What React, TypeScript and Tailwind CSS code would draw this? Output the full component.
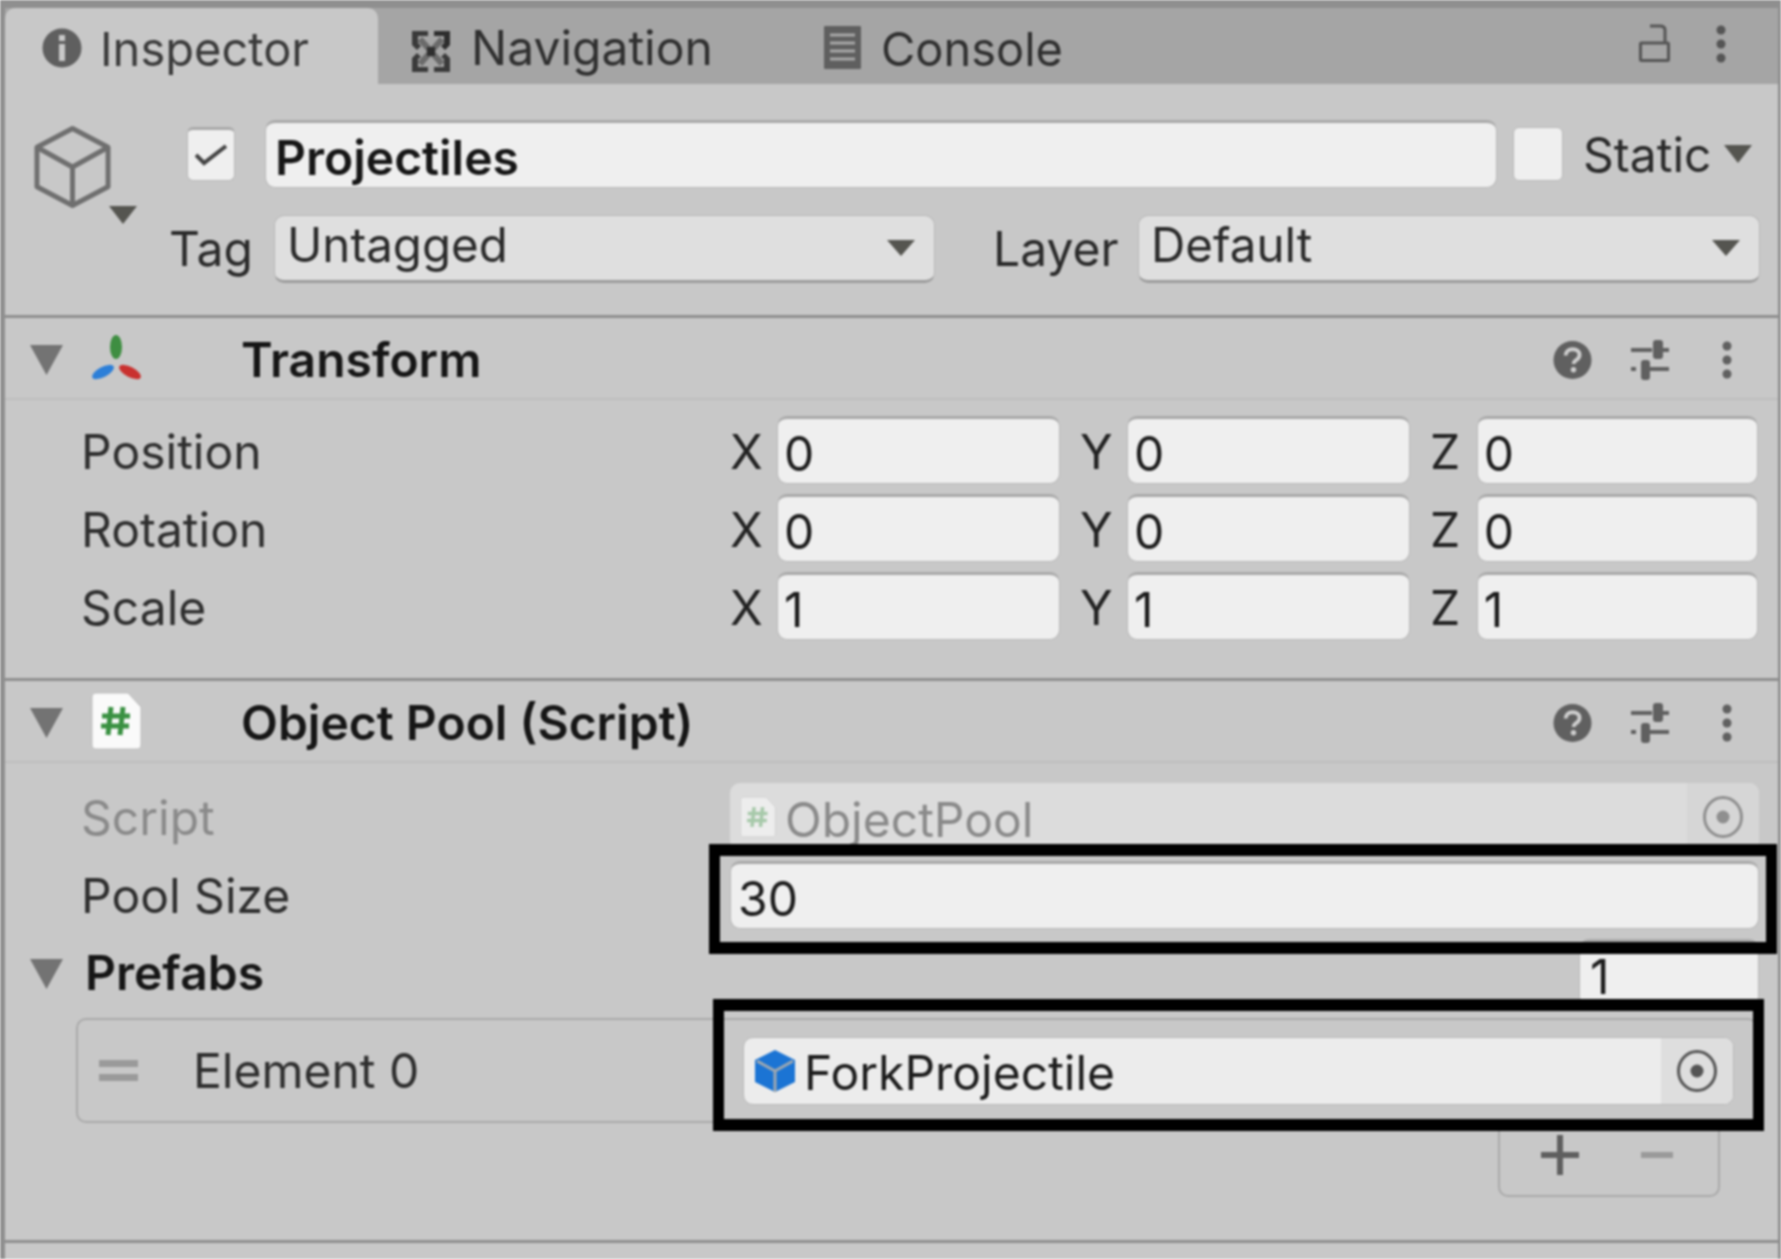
const CaretDown = ({ className }: { className: string }) => (
  <svg viewBox="0 0 10 10" preserveAspectRatio="none" className={className}>
    <path d="M0 0H10L5 10Z" fill="currentColor" />
  </svg>
);

const Kebab = ({ className }: { className: string }) => (
  <svg viewBox="0 0 12 38" className={className}>
    <circle cx="6" cy="5" r="4.5" fill="currentColor" />
    <circle cx="6" cy="19" r="4.5" fill="currentColor" />
    <circle cx="6" cy="33" r="4.5" fill="currentColor" />
  </svg>
);

const HelpIcon = () => (
  <svg viewBox="0 0 40 40" className="w-[39px] h-[40px]">
    <circle cx="20" cy="20" r="19.5" fill="#606060" />
    <path d="M13 15.5c0-4 3-6.5 7.2-6.5s7 2.400 7 5.800c0 3-1.800 4.300-3.800 5.600-1.600 1-2.200 1.800-2.200 3.600" fill="none" stroke="#cfcfcf" strokeWidth="4" />
    <circle cx="21" cy="30" r="2.800" fill="#cfcfcf" />
  </svg>
);

const SlidersIcon = () => (
  <svg viewBox="0 0 38 40" className="w-[38px] h-[40px]" fill="#606060">
    <rect x="0" y="8" width="21" height="4" />
    <rect x="22" y="0" width="10" height="19" rx="3" />
    <rect x="31" y="8" width="7" height="4" />
    <rect x="0" y="27" width="5" height="4" />
    <rect x="10" y="20" width="9" height="20" rx="3" />
    <rect x="18" y="27" width="20" height="4" />
  </svg>
);

const ComponentActions = () => (
  <div className="flex items-center text-[#606060] translate-y-[2px]">
    <HelpIcon />
    <div className="ml-[39px]"><SlidersIcon /></div>
    <Kebab className="ml-[52px] w-[12px] h-[38px]" />
  </div>
);

const CubeOutline = () => (
  <svg viewBox="0 0 80 84" className="w-[79px] h-[84px]" fill="none" stroke="#6f6f6f" strokeWidth="5" strokeLinejoin="round">
    <path d="M40 3L76 22V62L40 81L4 62V22Z" />
    <path d="M4 22L40 42L76 22M40 42V81" />
  </svg>
);

const InfoIcon = () => (
  <svg viewBox="0 0 40 40" className="w-[40px] h-[40px]">
    <circle cx="20" cy="20" r="19.5" fill="#5f5f5f" />
    <rect x="17" y="7" width="6" height="6" fill="#c8c8c8" />
    <rect x="17" y="16" width="6" height="17" fill="#c8c8c8" />
  </svg>
);

const NavIcon = () => (
  <svg viewBox="0 0 38 41" className="w-[38px] h-[41px]">
    <path d="M8 8L30 33M30 8L8 33" stroke="#6a6a6a" strokeWidth="6" />
    <path d="M15 16H23V25H15Z" fill="#2e2e2e" />
    <path d="M0 0H16V5H6V12L9 15L5 19L0 14Z" fill="#3a3a3a" />
    <path d="M38 0H22V5H32V12L29 15L33 19L38 14Z" fill="#2e2e2e" />
    <path d="M0 41H16V36H6V28L9 26L5 22L0 27Z" fill="#3a3a3a" />
    <path d="M38 41H22V36H32V28L29 26L33 22L38 27Z" fill="#3a3a3a" />
  </svg>
);

const ConsoleIcon = () => (
  <svg viewBox="0 0 37 43" className="w-[37px] h-[43px]">
    <rect width="37" height="43" rx="1" fill="#5f5f5f" />
    <path d="M6 9H31M6 17H31M6 25H31M6 33H31" stroke="#a8a8a8" strokeWidth="3" />
  </svg>
);

const LockIcon = () => (
  <svg viewBox="0 0 31 38" className="w-[31px] h-[38px]" fill="none" stroke="#555555" strokeWidth="3">
    <rect x="1.5" y="19" width="28" height="17.5" rx="1" />
    <path d="M26 19V6C26 3 24 2 21 2H11" />
  </svg>
);

const TransformIcon = () => (
  <svg viewBox="0 0 53 46" className="w-[53px] h-[46px]">
    <ellipse cx="26" cy="12" rx="6" ry="12" fill="#3e8e41" />
    <ellipse cx="13" cy="37" rx="5" ry="12" transform="rotate(62 13 37)" fill="#2c7fd8" />
    <ellipse cx="40" cy="37" rx="5" ry="12" transform="rotate(-62 40 37)" fill="#c9312f" />
  </svg>
);

const ScriptIcon = ({ className, faded }: { className: string; faded?: boolean }) => (
  <svg viewBox="0 0 51 58" className={className}>
    <path d="M5 1H37L50 15V53C50 55.5 48.500 57 46 57H5C2.500 57 1 55.500 1 53V5C1 2.500 2.500 1 5 1Z" fill={faded ? "#ededed" : "#fafafa"} stroke={faded ? "#cfcfcf" : "#bdbdbd"} />
    <path d="M20 15L17 43M32 15L29 43M11 24H39M10 34H38" stroke={faded ? "#a7c9aa" : "#3a9142"} strokeWidth="5" fill="none" />
  </svg>
);

const PrefabCube = () => (
  <svg viewBox="0 0 40 42" className="w-[40px] h-[42px]">
    <path d="M20 0L40 10V32L20 42L0 32V10Z" fill="#1b74d4" />
    <path d="M20 21L38 11M20 21L2 11M20 21V42" fill="none" stroke="#9fa8b0" strokeWidth="3" />
  </svg>
);

const Target = ({ color }: { color: string }) => (
  <svg viewBox="0 0 40 42" className="w-[40px] h-[42px]" fill="none">
    <ellipse cx="20" cy="21" rx="18.500" ry="19.500" stroke={color} strokeWidth="3" />
    <circle cx="20" cy="21" r="6.500" fill={color} />
  </svg>
);

const InputBox = ({ children, className }: { children?: React.ReactNode; className: string }) => (
  <div className={`h-[68px] bg-[#efefef] rounded-[10px] border border-[#b8b8b8] border-t-[3px] border-t-[#a9a9a9] flex items-center text-[#1c1c1c] ${className}`}>
    <span className="translate-y-[3px]">{children}</span>
  </div>
);

const Dropdown = ({ label, className }: { label: string; className: string }) => (
  <div className={`h-[68px] bg-[#dfdfdf] rounded-[10px] border border-[#b8b8b8] border-b-[3px] border-b-[#9c9c9c] flex items-center justify-between pl-[12px] pr-[19px] text-[#2a2a2a] ${className}`}>
    <span className="-translate-y-[3px] text-[47.500px]">{label}</span>
    <CaretDown className="w-[28px] h-[16px] text-[#555550]" />
  </div>
);

const Disclosure = () => <CaretDown className="w-[33px] h-[30px] text-[#737373] translate-y-[2px]" />;

const VectorRow = ({ label, values }: { label: string; values: string[] }) => (
  <div className="flex items-center h-[67px]">
    <span className="w-[728px] pl-[76px] text-[#2e2e2e] translate-y-[2px]">{label}</span>
    {["X", "Y", "Z"].map((axis, i) => (
      <div key={axis} className={`flex items-center ${i < 2 ? "w-[350px]" : "w-[325px]"}`}>
        <span className="w-[44px] -ml-[3px] mr-[3px] text-[#222222] translate-y-[2px]">{axis}</span>
        <InputBox className={`pl-[6px] ${i === 0 ? "w-[283px]" : i === 1 ? "w-[283px]" : "w-[282px]"}`}>{values[i]}</InputBox>
      </div>
    ))}
  </div>
);

const ComponentHeader = ({ icon, title }: { icon: React.ReactNode; title: string }) => (
  <div className="h-[82px] flex items-center border-b-2 border-[#bdbdbd] pl-[25px] pr-[45px]">
    <Disclosure />
    <div className="w-[53px] ml-[27px] flex justify-center">{icon}</div>
    <span className="ml-[98px] font-semibold text-[#161616] flex-1 translate-y-[2px]">{title}</span>
    <ComponentActions />
  </div>
);

export default function App() {
  return (
    <div className="relative w-[1781px] h-[1259px] overflow-hidden bg-[#c8c8c8] border-l-[5px] border-r-[3px] border-t-[8px] border-[#8f8f8f] text-[48px] leading-none font-['Inter',sans-serif] blur-[1px]">
      {/* tab strip */}
      <div className="h-[76px] bg-[#a5a5a5] flex items-center text-[#2f2f2f]">
        <div className="w-[373px] h-full bg-[#c8c8c8] rounded-t-[10px] flex items-center pl-[37px]">
          <div className="translate-y-[2px]"><InfoIcon /></div>
          <span className="ml-[18px] text-[47px] text-[#3a3a3a] translate-y-[2px]">Inspector</span>
        </div>
        <div className="ml-[34px] mt-[10px]"><NavIcon /></div>
        <span className="ml-[21px] translate-y-[2px]">Navigation</span>
        <div className="ml-[111px] translate-y-[1px]"><ConsoleIcon /></div>
        <span className="ml-[20px] text-[47px] translate-y-[2px]">Console</span>
        <div className="flex-1" />
        <div className="-translate-y-[3px]"><LockIcon /></div>
        <Kebab className="ml-[45px] mr-[51px] w-[12px] h-[38px] text-[#555555] -translate-y-[2px]" />
      </div>

      {/* game object header */}
      <div className="h-[234px] flex border-b-[3px] border-[#8f8f8f]">
        <div className="w-[145px] pt-[41px] pl-[28px] relative">
          <CubeOutline />
          <CaretDown className="absolute left-[104px] top-[122px] w-[28px] h-[18px] text-[#555550]" />
        </div>
        <div className="flex-1 pt-[36px] flex flex-col gap-[27px]">
          <div className="flex items-center h-[68px]">
            <div className="ml-[37px] w-[48px] h-[54px] bg-[#efefef] rounded-[6px] border border-[#b8b8b8] border-t-[3px] border-t-[#a9a9a9] flex items-center justify-center">
              <svg viewBox="0 0 32 22" className="w-[32px] h-[22px]" fill="none" stroke="#444444" strokeWidth="4">
                <path d="M1 11L9 19L31 2" />
              </svg>
            </div>
            <InputBox className="ml-[30px] w-[1232px] pl-[9px] font-semibold text-[#161616]">Projectiles</InputBox>
            <div className="ml-[16px] w-[50px] h-[54px] bg-[#efefef] rounded-[6px] border border-[#b8b8b8]" />
            <span className="ml-[20px] text-[#2a2a2a] translate-y-[1px]">Static</span>
            <CaretDown className="ml-[13px] w-[28px] h-[18px] text-[#555550]" />
          </div>
          <div className="flex items-center">
            <span className="ml-[19px] w-[105px] text-[#2a2a2a]">Tag</span>
            <Dropdown label="Untagged" className="w-[661px]" />
            <span className="ml-[58px] w-[145px] text-[#2a2a2a]">Layer</span>
            <Dropdown label="Default" className="w-[622px]" />
          </div>
        </div>
      </div>

      {/* transform */}
      <div className="h-[363px] border-b-[3px] border-[#8f8f8f]">
        <ComponentHeader icon={<TransformIcon />} title="Transform" />
        <div className="pt-[16px] flex flex-col gap-[11px]">
          <VectorRow label="Position" values={["0", "0", "0"]} />
          <VectorRow label="Rotation" values={["0", "0", "0"]} />
          <VectorRow label="Scale" values={["1", "1", "1"]} />
        </div>
      </div>

      {/* object pool */}
      <div className="h-[562px] border-b-[3px] border-[#8f8f8f]">
        <ComponentHeader icon={<ScriptIcon className="w-[51px] h-[58px]" />} title="Object Pool (Script)" />
        <div className="pt-[20px]">
          <div className="flex items-center h-[67px]">
            <span className="w-[725px] pl-[76px] text-[#8a8a8a] translate-y-[1px]">Script</span>
            <div className="w-[1029px] h-[67px] bg-[#dcdcdc] rounded-[10px] flex items-center pl-[10px] text-[#8a8a8a]">
              <ScriptIcon faded className="w-[36px] h-[44px]" />
              <span className="ml-[9px] flex-1 translate-y-[3px]">ObjectPool</span>
              <div className="w-[72px] h-full flex items-center justify-center bg-[#d6d6d6] rounded-r-[10px]"><Target color="#8f8f8f" /></div>
            </div>
          </div>
          <div className="flex items-center h-[67px] mt-[11px]">
            <span className="w-[725px] pl-[76px] text-[#2e2e2e] translate-y-[1px]">Pool Size</span>
            <InputBox className="w-[1029px] pl-[7px]">30</InputBox>
          </div>
          <div className="flex items-center h-[67px] mt-[10px] pl-[25px]">
            <Disclosure />
            <span className="ml-[22px] font-semibold text-[#161616] flex-1 translate-y-[1px]">Prefabs</span>
            <InputBox className="w-[180px] mr-[19px] pl-[10px] translate-y-[1px]">1</InputBox>
          </div>
          <div className="mt-[13px] ml-[71px] mr-[20px] h-[105px] rounded-[10px] border-2 border-[#a9a9a9] flex items-center pl-[21px] pr-[22px]">
            <div className="w-[39px] flex flex-col gap-[7px]">
              <div className="h-[7px] bg-[#9a9a9a]" />
              <div className="h-[7px] bg-[#9a9a9a]" />
            </div>
            <span className="ml-[55px] w-[550px] text-[#2e2e2e]">Element 0</span>
            <div className="flex-1 h-[68px] bg-[#ececec] rounded-[10px] border border-[#b8b8b8] flex items-center pl-[11px] text-[#1c1c1c] overflow-hidden">
              <PrefabCube />
              <span className="ml-[9px] flex-1 translate-y-[2px]">ForkProjectile</span>
              <div className="w-[72px] h-full bg-[#dedede] flex items-center justify-center"><Target color="#555555" /></div>
            </div>
          </div>
          <div className="ml-auto mr-[58px] w-[222px] h-[75px] rounded-b-[10px] border-2 border-t-0 border-[#a9a9a9] flex items-center text-[#5f5f5f] -mt-[1px]">
            <svg viewBox="0 0 38 40" className="ml-[41px] w-[38px] h-[40px] mt-[-8px]" fill="currentColor">
              <path d="M16 0H22V17H38V23H22V40H16V23H0V17H16Z" />
            </svg>
            <div className="ml-[62px] mt-[-8px] w-[32px] h-[6px] bg-[#9a9a9a]" />
          </div>
        </div>
      </div>

      {/* black highlight frames over the fields */}
      <div className="absolute left-[704px] top-[836px] w-[1068px] h-[110px] border-x-[11px] border-y-[12px] border-black" />
      <div className="absolute left-[708px] top-[991px] w-[1051px] h-[132px] border-x-[11px] border-y-[12px] border-black" />
    </div>
  );
}
